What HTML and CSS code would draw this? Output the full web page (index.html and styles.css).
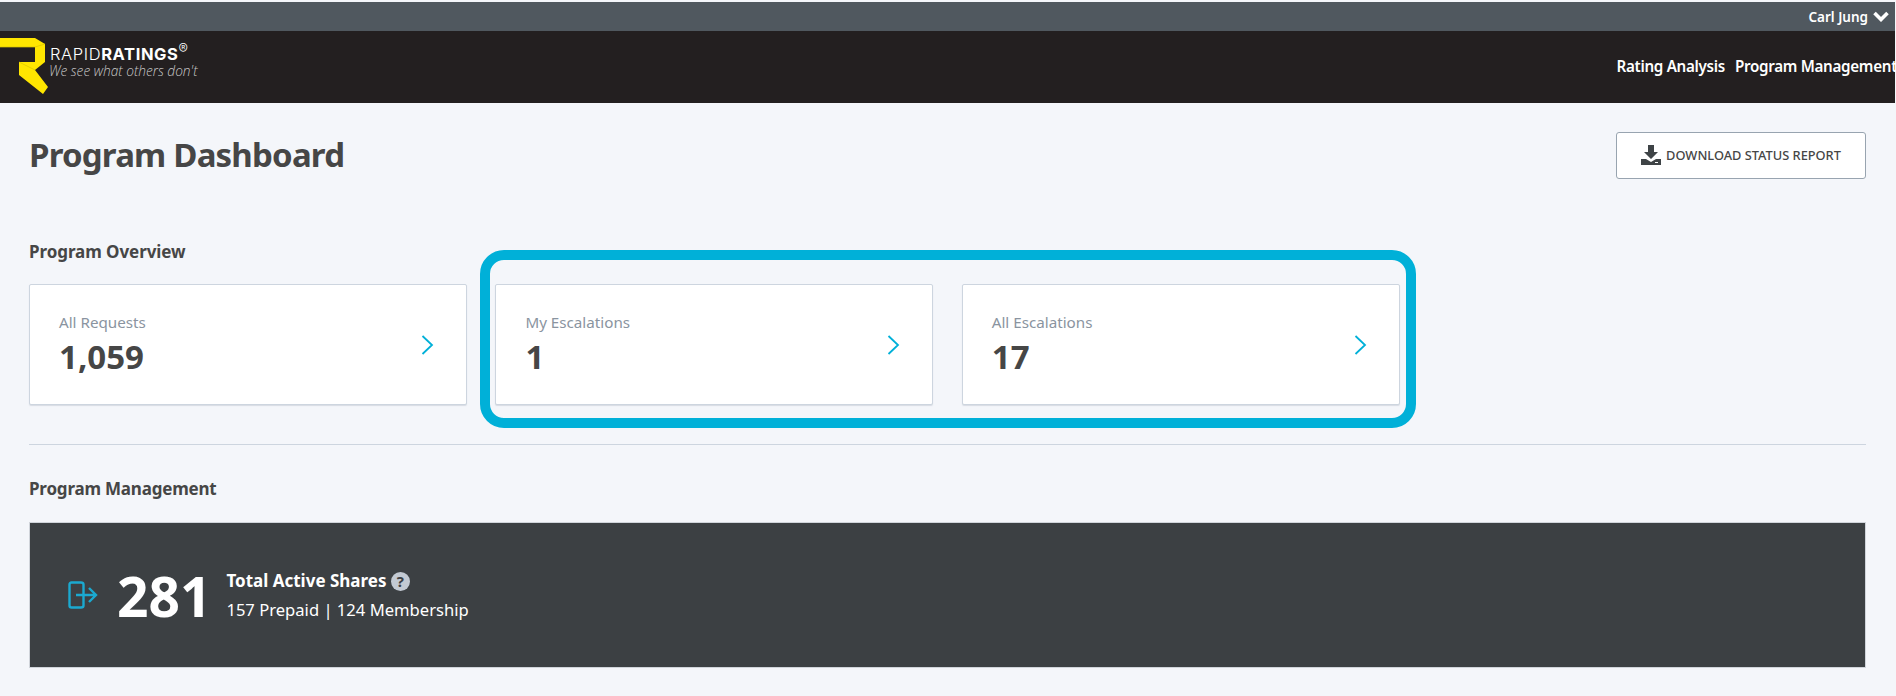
FILE: index.html
```html
<!DOCTYPE html>
<html lang="en">
<head>
    <meta charset="UTF-8">
    <title>Program Dashboard</title>
    <link rel="stylesheet" href="styles.css">
</head>
<body>
    <div class="user-bar">
        <span>Carl Jung</span>
        <svg class="user-caret" width="16" height="11" viewBox="0 0 16 11"><path d="M1.5 2 L8 8.5 L14.5 2" fill="none" stroke="#fff" stroke-width="3.6"/></svg>
    </div>
    <header class="nav-bar">
        <div class="logo">
            <svg class="logo-mark" width="50" height="64" viewBox="0 0 50 64">
                <path d="M0 7 H35 L45 13 V31 L35 39 L48 56 L43 63 L19 44 V31 H35 V16 H0 Z" fill="#ffe600"/>
                <path d="M0 16 H35 L45 13 M19 31 L35 39" fill="none" stroke="#d8c400" stroke-width="0.7"/>
            </svg>
            <div class="logo-text">
                <div class="logo-name"><span class="logo-light">RAPID</span><b>RATINGS</b><sup>®</sup></div>
                <div class="logo-tag">We see what others don't</div>
            </div>
        </div>
        <nav class="nav-links">
            <a>Rating Analysis</a>
            <a>Program Management</a>
        </nav>
    </header>

    <main class="content">
        <div class="title-row">
            <h1>Program Dashboard</h1>
            <button class="report-btn">
                <svg width="20" height="20" viewBox="0 0 20 20"><path d="M7 0 H13 V7 H17 L10 14 L3 7 H7 Z M0 14 H5 L10 17 L15 14 H20 V20 H0 Z" fill="#3e4346"/><rect x="14" y="17" width="3" height="1" fill="#fff"/></svg>
                DOWNLOAD STATUS REPORT
            </button>
        </div>

        <h2 class="overview-title">Program Overview</h2>
        <div class="cards">
            <div class="card">
                <div>
                    <div class="card-label">All Requests</div>
                    <div class="card-value">1,059</div>
                </div>
                <svg class="card-arrow" width="13" height="20" viewBox="0 0 13 20"><path d="M1.5 1 L11 10 L1.5 19" fill="none" stroke="#00b0d8" stroke-width="1.8"/></svg>
            </div>
            <div class="card">
                <div>
                    <div class="card-label">My Escalations</div>
                    <div class="card-value">1</div>
                </div>
                <svg class="card-arrow" width="13" height="20" viewBox="0 0 13 20"><path d="M1.5 1 L11 10 L1.5 19" fill="none" stroke="#00b0d8" stroke-width="1.8"/></svg>
            </div>
            <div class="card">
                <div>
                    <div class="card-label">All Escalations</div>
                    <div class="card-value">17</div>
                </div>
                <svg class="card-arrow" width="13" height="20" viewBox="0 0 13 20"><path d="M1.5 1 L11 10 L1.5 19" fill="none" stroke="#00b0d8" stroke-width="1.8"/></svg>
            </div>
            <div class="highlight"></div>
        </div>

        <hr class="divider">

        <h2 class="management-title">Program Management</h2>
        <section class="shares">
            <svg class="shares-icon" width="30" height="28" viewBox="0 0 30 28"><path d="M12 1.5 H3.5 Q1.5 1.5 1.5 3.5 V24.5 Q1.5 26.5 3.5 26.5 H13 Q15.5 26.5 15.5 24.5 V3.5 Q15.5 1.5 13 1.5 H12 M8 14 H27 M21 7 L28 14 L21 21" fill="none" stroke="#1ba9d0" stroke-width="2.4"/></svg>
            <div class="shares-value">281</div>
            <div class="shares-text">
                <div class="shares-title">Total Active Shares <span class="help">?</span></div>
                <div class="shares-sub">157 Prepaid | 124 Membership</div>
            </div>
        </section>
    </main>
</body>
</html>
```

FILE: styles.css
```css
html, body {
    height: 100%;
}
body {
    margin: 0;
    padding-top: 2px;
    padding-right: 1px;
    box-sizing: border-box;
    background-color: #f4f6fa;
    font-family: "Noto Sans", sans-serif;
    color: #464646;
    overflow: hidden;
}
.user-bar {
    height: 29px;
    background-color: #50585f;
    color: white;
    display: flex;
    justify-content: flex-end;
    align-items: center;
    padding-right: 6px;
    font-size: 13.5px;
    font-weight: 600;
}
.user-caret {
    margin-left: 5px;
}
.nav-bar {
    height: 72px;
    background-color: #231f20;
    display: flex;
    justify-content: space-between;
    align-items: center;
}
.logo {
    display: flex;
    align-items: flex-start;
    align-self: flex-start;
}
.logo-text {
    margin-top: 15px;
    color: white;
}
.logo-name {
    font-family: "Inter", sans-serif;
    font-size: 16.5px;
    line-height: 17px;
    letter-spacing: 0.6px;
}
.logo-light {
    font-weight: 300;
}
.logo-name sup {
    font-size: 14px;
    font-weight: 300;
    line-height: 0;
}
.logo-tag {
    font-family: "Open Sans", sans-serif;
    font-size: 13.7px;
    font-weight: 300;
    font-style: italic;
    color: #c8c8c8;
    line-height: 16px;
    margin-left: -1px;
}
.nav-links {
    display: flex;
    gap: 10px;
    font-size: 15.2px;
    font-weight: 600;
    color: white;
    margin-right: -2px;
    padding-bottom: 2px;
    letter-spacing: -0.3px;
    white-space: nowrap;
}
.content {
    padding: 0 29px;
}
.title-row {
    display: flex;
    justify-content: space-between;
    align-items: flex-start;
    padding-top: 29px;
    height: 98px;
    box-sizing: content-box;
}
h1 {
    margin: 0;
    font-size: 33px;
    font-weight: 700;
    line-height: 45px;
    letter-spacing: -0.8px;
}
.report-btn {
    width: 250px;
    height: 47px;
    background-color: white;
    border: 1px solid #98a4b0;
    border-radius: 3px;
    font-family: "Noto Sans", sans-serif;
    font-size: 12.8px;
    font-weight: 500;
    color: #464646;
    display: flex;
    align-items: center;
    justify-content: center;
    gap: 5px;
    padding: 0 0 1px;
}
h2 {
    margin: 0;
    font-size: 17px;
    font-weight: 700;
    line-height: 22px;
}
.overview-title {
    margin-top: 11px;
    letter-spacing: -0.07px;
}
.cards {
    position: relative;
    display: grid;
    grid-template-columns: repeat(4, 1fr);
    gap: 28.5px;
    margin-top: 21px;
}
.card {
    height: 121px;
    box-sizing: border-box;
    background-color: white;
    border: 1px solid #cdd5df;
    border-radius: 2px;
    box-shadow: 0 1px 1px rgba(150, 160, 175, 0.3);
    display: flex;
    justify-content: space-between;
    align-items: center;
    padding: 0 32px 0 29px;
}
.card-label {
    font-size: 15.2px;
    color: #8a94a0;
    line-height: 20px;
}
.card-value {
    font-size: 33px;
    font-weight: 700;
    line-height: 40px;
    margin-top: 5px;
}
/* blue frame that was drawn over the two escalation cards */
.highlight {
    position: absolute;
    left: 451px;
    top: -34px;
    width: 936px;
    height: 178px;
    box-sizing: border-box;
    border: 10px solid #00b0d8;
    border-radius: 24px;
}
.divider {
    border: none;
    border-top: 1px solid #cdd5df;
    margin: 39px 0 0;
}
.management-title {
    margin-top: 33px;
    letter-spacing: -0.2px;
}
.shares {
    margin-top: 22px;
    height: 146px;
    box-sizing: border-box;
    background-color: #3c4043;
    border: 1px solid #d0d4da;
    display: flex;
    align-items: center;
    padding-left: 38px;
}
.shares-icon {
    margin-right: 19px;
}
.shares-value {
    font-size: 55px;
    font-weight: 700;
    color: white;
    margin-right: 15px;
}
.shares-text {
    padding-top: 4px;
}
.shares-title {
    font-size: 17px;
    font-weight: 700;
    color: white;
    line-height: 24px;
}
.help {
    display: inline-block;
    width: 19px;
    height: 19px;
    border-radius: 50%;
    background-color: #c3cad3;
    color: #3c4043;
    font-size: 15px;
    line-height: 19px;
    text-align: center;
}
.shares-sub {
    font-size: 16.6px;
    color: white;
    line-height: 30px;
    margin-top: 2px;
}
```
